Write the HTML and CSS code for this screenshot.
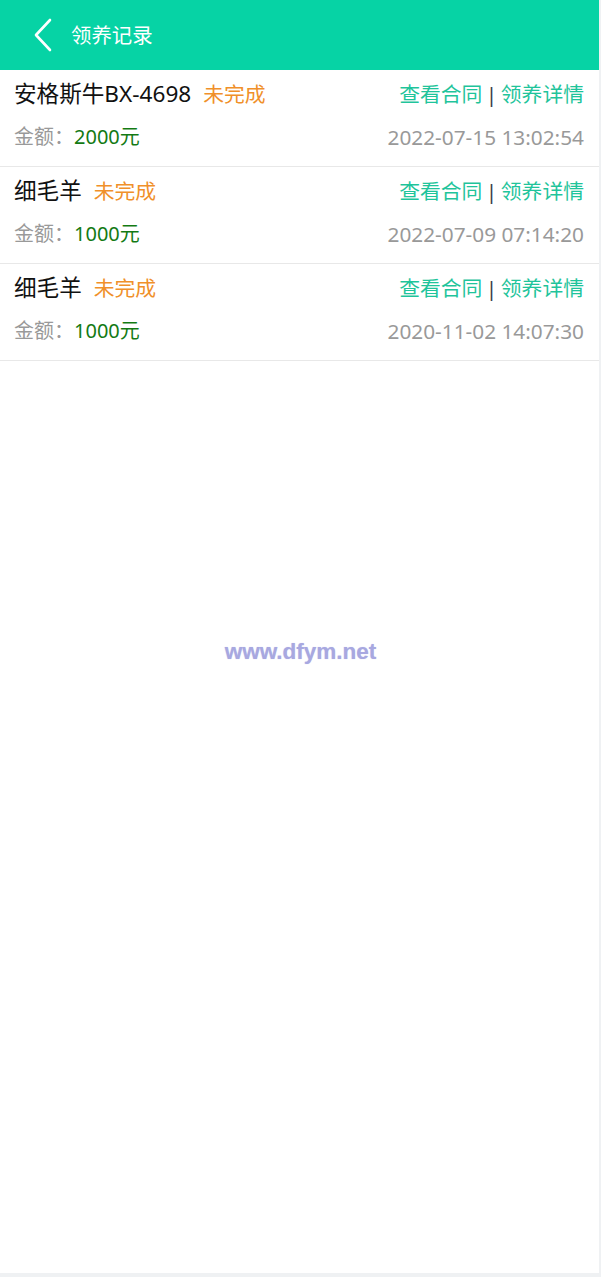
FILE: index.html
```html
<!DOCTYPE html>
<html lang="zh-CN">
<head>
<meta charset="utf-8">
<title>领养记录</title>
<link rel="stylesheet" href="styles.css">
</head>
<body>
<div class="app">
  <header class="topbar">
    <span class="back">
      <svg width="20" height="34" viewBox="0 0 20 34"><polyline points="17,2 3,17 17,32" fill="none" stroke="#fff" stroke-width="2.6" stroke-linecap="round" stroke-linejoin="round"/></svg>
    </span>
    <h1 class="title">领养记录</h1>
  </header>
  <ul class="list">
    <li class="item">
      <div class="line">
        <div class="name">安格斯牛BX-4698<span class="status">未完成</span></div>
        <div class="links"><a>查看合同</a><span class="sep">|</span><a>领养详情</a></div>
      </div>
      <div class="line sub">
        <div class="amount">金额：<span class="money">2000元</span></div>
        <div class="date">2022-07-15 13:02:54</div>
      </div>
    </li>
    <li class="item">
      <div class="line">
        <div class="name">细毛羊<span class="status">未完成</span></div>
        <div class="links"><a>查看合同</a><span class="sep">|</span><a>领养详情</a></div>
      </div>
      <div class="line sub">
        <div class="amount">金额：<span class="money">1000元</span></div>
        <div class="date">2022-07-09 07:14:20</div>
      </div>
    </li>
    <li class="item">
      <div class="line">
        <div class="name">细毛羊<span class="status">未完成</span></div>
        <div class="links"><a>查看合同</a><span class="sep">|</span><a>领养详情</a></div>
      </div>
      <div class="line sub">
        <div class="amount">金额：<span class="money">1000元</span></div>
        <div class="date">2020-11-02 14:07:30</div>
      </div>
    </li>
  </ul>
  <div class="watermark">www.dfym.net</div>
</div>
</body>
</html>
```
FILE: styles.css
```css
* { box-sizing: border-box; }
html, body { margin: 0; padding: 0; }
body {
  background: #eff1f3;
  font-family: "Noto Sans", "Noto Sans CJK SC", sans-serif;
}
.app {
  width: 599px;
  height: 1273px;
  background: #fff;
  display: flex;
  flex-direction: column;
}
.topbar {
  height: 70px;
  background: #06d3a5;
  display: flex;
  align-items: center;
  padding-left: 33px;
}
.back { display: flex; width: 20px; height: 34px; }
.title {
  margin: 0 0 0 18px;
  font-size: 20.4px;
  font-weight: normal;
  color: #fff;
  line-height: 1;
}
.list { list-style: none; margin: 0; padding: 0; }
.item {
  border-bottom: 1px solid #e8e8e8;
  padding: 9px 15px 0 14px;
  height: 97px;
}
.line {
  display: flex;
  justify-content: space-between;
  align-items: center;
  height: 30px;
}
.line.sub { margin-top: 13px; height: 30px; }
.name { font-size: 22.6px; color: #111; line-height: 30px; }
.status { font-size: 20.8px; color: #f0902a; margin-left: 12px; }
.links { font-size: 20.8px; color: #1fc49b; line-height: 30px; }
.links a { color: #1fc49b; }
.sep { color: #3a3f4a; margin: 0 3.5px; }
.amount { font-size: 20px; color: #999; line-height: 30px; }
.money { color: #137a13; }
.date { font-size: 20.8px; color: #999; line-height: 30px; }
.watermark {
  margin-top: 278px;
  text-align: center;
  font-family: "Liberation Sans", Arial, sans-serif;
  font-weight: bold;
  font-size: 22.5px;
  color: #a8a8e0;
  text-shadow: 0 0 1px #c8c8f0;
  padding-left: 2px;
}
```
